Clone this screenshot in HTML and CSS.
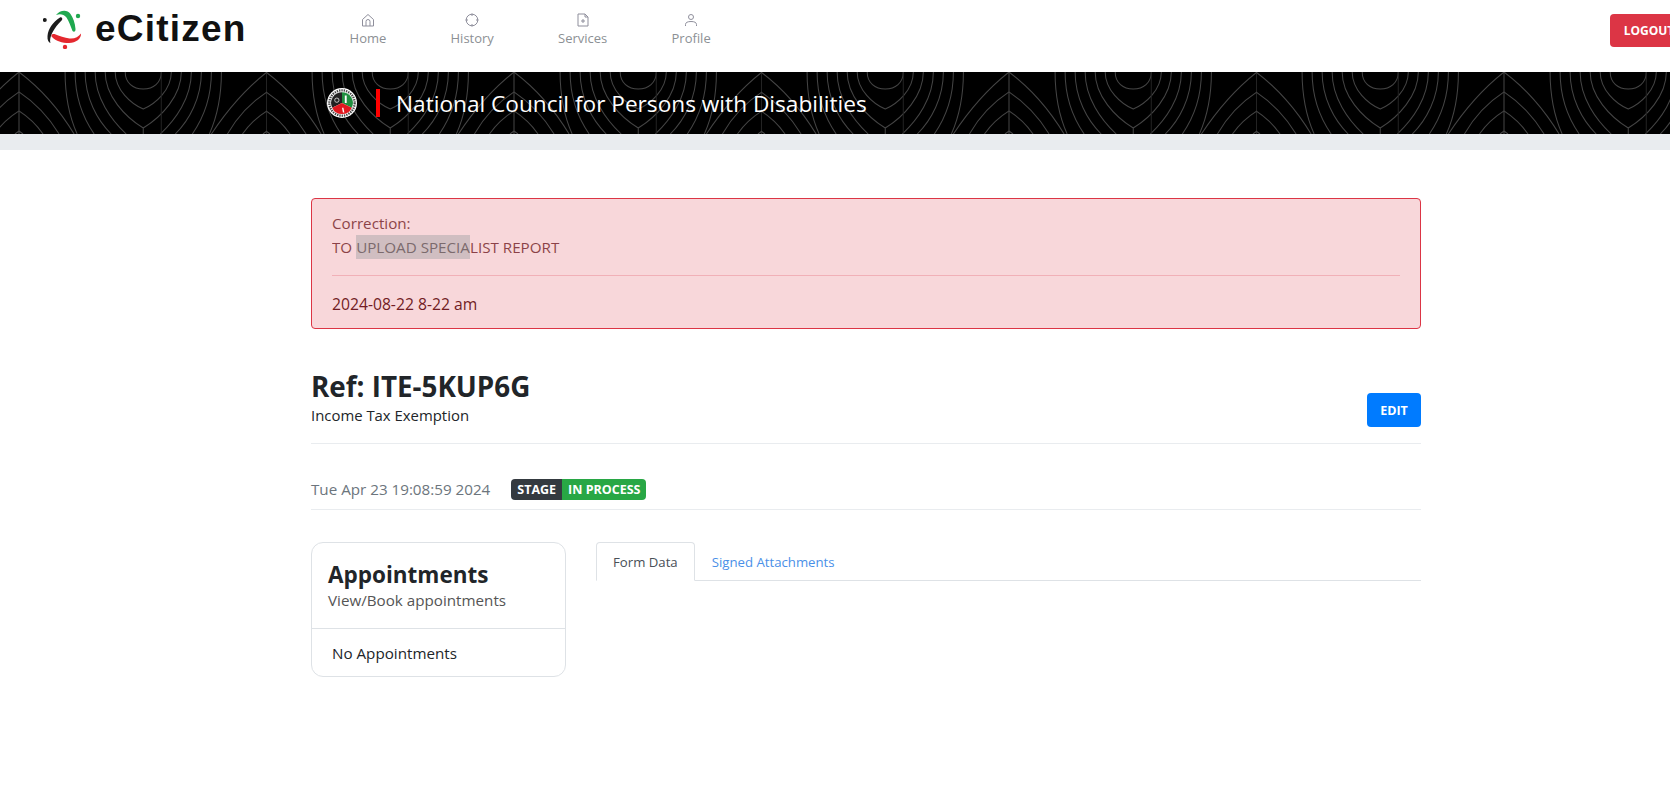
FILE: index.html
```html
<!DOCTYPE html>
<html lang="en">
<head>
<meta charset="utf-8">
<title>eCitizen</title>
<link rel="stylesheet" href="styles.css">
</head>
<body>
<div class="page">
  <header class="topbar">
    <a class="brand">
      <svg class="brand-mark" viewBox="0 0 40 40" width="40" height="40">
        <path d="M17 8.500C10 13 5 20 4.500 27c-.3 4 1 6.500 3 7-1-3 0-8 4-14 2.500-3.800 5-6.500 7.500-9 1-1.500-.5-3.500-2-2.500z" fill="#1c1c1c"/>
        <path d="M13 6C17 1 24 0 27.500 5c2.500 3.500 4.500 9 5 15 .2 2.500-1.500 3.500-3 2-2-5-3.500-10-6-13.500C20.500 5 17 4.500 13 6z" fill="#1fa84f"/>
        <path d="M9 28c-1.500-1.500 0-3.500 2.500-3 5 2 10 4 15 4.500 5 .5 9-1.500 11.500-5 .5 5-5 9.500-12 9.500-7 0-13-2-17-6z" fill="#e4282f"/>
        <circle cx="1.800" cy="11" r="2" fill="#1c1c1c"/>
        <circle cx="35" cy="7" r="2.200" fill="#1fa84f"/>
        <circle cx="22" cy="38" r="2.200" fill="#e4282f"/>
      </svg>
      <span class="brand-name">eCitizen</span>
    </a>
    <nav class="mainnav">
      <a class="navitem">
        <svg class="navicon" viewBox="0 0 14 14"><path d="M1.500 6.500 7 1.500l5.500 5V13h-11z"/><path d="M5 13V8.500a2 2 0 0 1 4 0V13"/></svg>
        <span>Home</span>
      </a>
      <a class="navitem">
        <svg class="navicon" viewBox="0 0 14 14"><circle cx="7" cy="7" r="5.800"/><path d="M7 .5v2.500M7 11v2.500M.5 7H3M11 7h2.500"/></svg>
        <span>History</span>
      </a>
      <a class="navitem">
        <svg class="navicon" viewBox="0 0 14 14"><path d="M2 1h7l3 3v9H2z"/><path d="M9 1v3h3M7 6v4M5 8h4"/></svg>
        <span>Services</span>
      </a>
      <a class="navitem">
        <svg class="navicon" viewBox="0 0 14 14"><circle cx="7" cy="4" r="2.500"/><path d="M1.500 13v-1.500C1.500 9.500 3.500 8.500 7 8.500s5.500 1 5.500 3V13"/></svg>
        <span>Profile</span>
      </a>
    </nav>
    <button class="logout">LOGOUT</button>
  </header>

  <section class="agency">
    <svg class="emblem" viewBox="0 0 32 32" width="30" height="30">
      <circle cx="16" cy="16" r="16" fill="#fff"/>
      <circle cx="16" cy="16" r="13.500" fill="none" stroke="#444" stroke-width="2.400" stroke-dasharray="1.500 1"/>
      <path d="M16 16V4.500A11.500 11.500 0 0 0 5.500 21z" fill="#222"/>
      <path d="M16 16V4.500A11.500 11.500 0 0 1 26.500 21z" fill="#1f8f3f"/>
      <path d="M16 16 5.500 21A11.500 11.500 0 0 0 26.500 21z" fill="#e0181f"/>
      <path d="M19 8h2v8h-2zM16 21l1 5 1.500 0-1-5z" fill="#fff"/>
      <circle cx="10.500" cy="13" r="2.300" fill="none" stroke="#ccc"/>
    </svg>
    <span class="agency-rule"></span>
    <h1 class="agency-name">National Council for Persons with Disabilities</h1>
  </section>
  <div class="subbar"></div>

  <main class="container">
    <div class="alert">
      <div class="alert-note">Correction:</div>
      <div class="alert-note">TO <span class="selected">UPLOAD SPECIA</span>LIST REPORT</div>
      <hr class="alert-rule">
      <div class="alert-date">2024-08-22 8-22 am</div>
    </div>

    <div class="ref-row">
      <div>
        <h2 class="ref-title">Ref: ITE-5KUP6G</h2>
        <div class="ref-sub">Income Tax Exemption</div>
      </div>
      <button class="edit">EDIT</button>
    </div>

    <div class="status-row">
      <span class="status-date">Tue Apr 23 19:08:59 2024</span>
      <span class="badge"><span class="badge-key">STAGE</span><span class="badge-val">IN PROCESS</span></span>
    </div>

    <div class="columns">
      <aside class="card">
        <div class="card-head">
          <h3 class="card-title">Appointments</h3>
          <div class="card-sub">View/Book appointments</div>
        </div>
        <div class="card-body">No Appointments</div>
      </aside>
      <div class="tabs">
        <a class="tab tab-active">Form Data</a>
        <a class="tab">Signed Attachments</a>
      </div>
    </div>
  </main>
</div>
</body>
</html>
```
FILE: styles.css
```css
html, body { margin: 0; padding: 0; }
body {
  overflow: hidden;
  height: 796px;
  background: #fff;
  color: #212529;
  font-family: "Open Sans", "Noto Sans", sans-serif;
  font-size: 15.2px;
  line-height: 24px;
}
.page { width: 1732px; }

.topbar {
  display: flex;
  height: 72px;
  align-items: flex-start;
  padding-left: 43px;
  box-sizing: border-box;
}
.brand {
  display: flex;
  width: 274.5px;
  flex: none;
  align-items: center;
  gap: 12px;
  height: 58px;
}
.brand-name {
  font-family: "Liberation Sans", sans-serif;
  font-size: 37px;
  font-weight: 700;
  letter-spacing: 1.2px;
  color: #111;
  line-height: 58px;
}
.mainnav { display: flex; }
.navitem {
  display: flex;
  flex-direction: column;
  align-items: center;
  padding: 13px 32.1px 0;
  color: #8c9094;
  font-size: 13px;
  line-height: 20px;
}
.navicon {
  width: 14px;
  height: 14px;
  margin-bottom: 1px;
  fill: none;
  stroke: #8f8f9c;
  stroke-width: 1;
}
.logout {
  margin: 14px 44px 0 auto;
  width: 78px;
  height: 33px;
  border: 0;
  border-radius: 4px;
  background: #dc3545;
  color: #fff;
  font: 700 12px "Open Sans", sans-serif;
  padding: 0;
}

.agency {
  display: flex;
  align-items: center;
  height: 62px;
  box-sizing: border-box;
  padding-left: 327px;
  background-color: #000;
  background-image: url("data:image/svg+xml,%3Csvg xmlns='http://www.w3.org/2000/svg' width='247.5' height='62' viewBox='0 0 247.5 62'%3E%3Cg fill='none' stroke='%23454545'%3E%3Cpath d='M0 0V62M247.5 0V62'/%3E%3Cpath d='M0 0Q32 24 55 62M0 20Q24 36 40 62M0 39Q14 48 24 62M0 59 4 62M247.500 0Q217 24 192 62M247.500 20Q223 36 208 62M247.500 39Q233 48 223 62M247.500 59 243.500 62'/%3E%3Cpath d='M106 0C106 11 114 17 124 17S142 11 142 0M96 0C96 18 112 32 124 37C136 32 152 18 152 0M86 0C86 24 106 45 124 56C142 45 162 24 162 0M124 56V62'/%3E%3Cpath d='M76 0C76 26 92 48 107 62M66 0C66 26 78 48 92 62M56 0C56 24 64 46 75 62M46 0C46 20 50 44 58 62'/%3E%3Cpath d='M172 0C172 26 156 48 141 62M182 0C182 26 170 48 156 62M192 0C192 24 184 46 173 62M202 0C202 20 198 44 190 62'/%3E%3C/g%3E%3Cpath d='M142 0V62' stroke='%23222' fill='none'/%3E%3C/svg%3E");
  background-position: 19px 0;
  background-size: 247.5px 62px;
}
.emblem { flex: none; }
.agency-rule {
  width: 4px;
  height: 28px;
  margin-left: 19px;
  background: #f00;
  flex: none;
}
.agency-name {
  margin: 2px 0 0 16px;
  color: #fff;
  font-size: 22.65px;
  font-weight: 400;
  line-height: 30px;
}
.subbar { height: 16px; background: #e9ecef; }

.container {
  width: 1110px;
  margin: 0 auto;
  padding-top: 48px;
}

.alert {
  border: 1px solid #dc3545;
  border-radius: 4px;
  background: #f8d7da;
  padding: 12px 20px;
  color: #721c24;
}
.alert-note { opacity: .8; height: 24px; }
.selected {
  display: inline-block;
  background: #c7b9bb;
  color: #5c4f52;
  height: 24px;
}
.alert-rule {
  margin: 16px 0;
  border: 0;
  border-top: 1px solid #f1b0b7;
}
.alert-date { font-size: 15.7px; }

.ref-row {
  display: flex;
  justify-content: space-between;
  align-items: flex-end;
  margin-top: 40px;
  padding-bottom: 16px;
  border-bottom: 1px solid #e9ecef;
}
.ref-title {
  margin: 0;
  font-size: 27.8px;
  font-weight: 700;
  line-height: 34px;
}
.ref-sub { line-height: 24px; font-size: 14.9px; }
.edit {
  width: 54px;
  height: 34px;
  border: 0;
  border-radius: 4px;
  background: #007bff;
  color: #fff;
  font: 700 12.5px "Open Sans", sans-serif;
  padding: 0;
}

.status-row {
  display: flex;
  align-items: center;
  gap: 21px;
  padding: 33px 0 8px;
  border-bottom: 1px solid #e9ecef;
}
.status-date { color: #6c757d; }
.badge {
  display: flex;
  border-radius: 4px;
  overflow: hidden;
  color: #fff;
  font-size: 12.5px;
  font-weight: 700;
  line-height: 21px;
}
.badge-key { background: #343a40; padding: 0 6px; }
.badge-val { background: #28a745; padding: 0 6px; }

.columns {
  display: flex;
  align-items: flex-start;
  gap: 30px;
  margin-top: 32px;
}
.card {
  width: 255px;
  flex: none;
  box-sizing: border-box;
  border: 1px solid #dee2e6;
  border-radius: 12px;
}
.card-head {
  padding: 17px 16px 16px;
  border-bottom: 1px solid #dee2e6;
}
.card-title {
  margin: 0;
  font-size: 22.5px;
  font-weight: 700;
  line-height: 29px;
}
.card-sub { margin-top: -1px; color: #555; }
.card-body { padding: 12px 20px 11px; }

.tabs {
  display: flex;
  flex: 1;
  height: 38px;
  border-bottom: 1px solid #dee2e6;
}
.tab {
  height: 39px;
  box-sizing: border-box;
  padding: 7px 16px;
  border: 1px solid transparent;
  border-radius: 4px 4px 0 0;
  color: #4a90e8;
  font-size: 13.2px;
}
.tab-active {
  color: #495057;
  background: #fff;
  border-color: #dee2e6 #dee2e6 #fff;
}
```
